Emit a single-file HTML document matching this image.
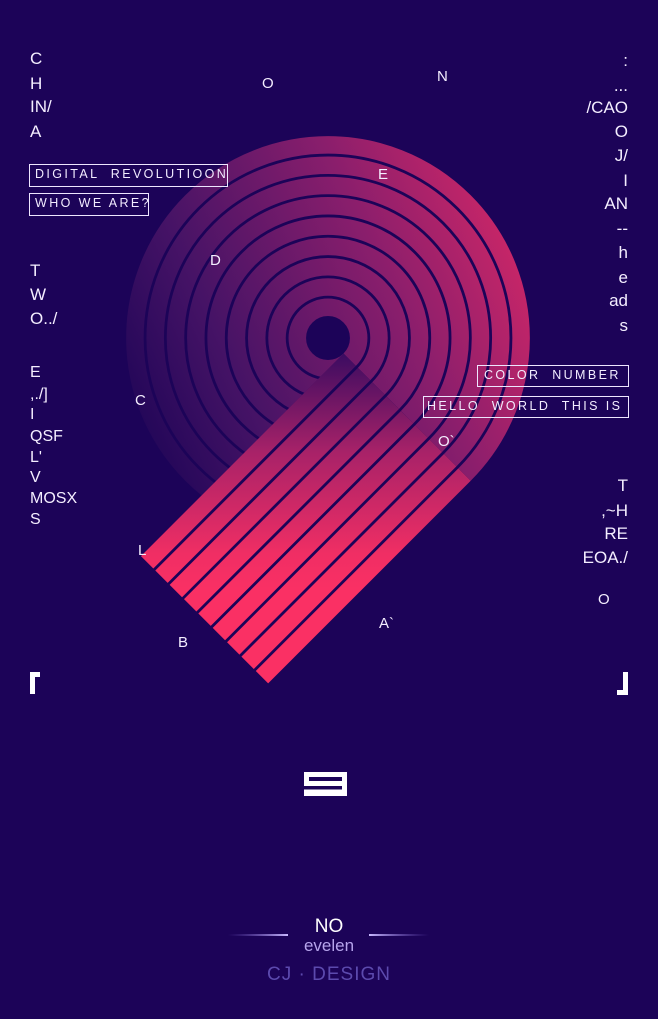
<!DOCTYPE html>
<html><head><meta charset="utf-8"><style>
*{margin:0;padding:0;box-sizing:border-box}
html,body{width:658px;height:1019px;overflow:hidden;background:#1c0358}
body{position:relative;font-family:"Liberation Sans",sans-serif;color:#f4eeff}
.t{position:absolute;font-size:17px;line-height:1;white-space:pre}
.r{text-align:right;right:30px}
.box{position:absolute;border:1.5px solid #eee6ff;font-size:12.5px;letter-spacing:2.4px;line-height:19px;padding-left:5px;white-space:pre;color:#f2ecff}
svg{position:absolute;left:0;top:0}
</style></head><body>
<svg width="658" height="1019" viewBox="0 0 658 1019">
<defs>
<linearGradient id="gc" gradientUnits="userSpaceOnUse" x1="140" y1="480" x2="540" y2="300">
<stop offset="0" stop-color="#1c0456"/><stop offset="0.3" stop-color="#461366"/><stop offset="0.7" stop-color="#8a1e6c"/><stop offset="1" stop-color="#c82668"/>
</linearGradient>
<linearGradient id="gt" gradientUnits="userSpaceOnUse" x1="0" y1="0" x2="180" y2="180">
<stop offset="0" stop-color="#2a0860"/><stop offset="0.45" stop-color="#a82268"/><stop offset="0.85" stop-color="#f02e64"/><stop offset="1" stop-color="#fa3064"/>
</linearGradient>
</defs>
<g fill="none" stroke="url(#gc)" stroke-width="17.5">
<circle cx="328" cy="338" r="30.7"/>
<circle cx="328" cy="338" r="51"/>
<circle cx="328" cy="338" r="71.3"/>
<circle cx="328" cy="338" r="91.6"/>
<circle cx="328" cy="338" r="111.9"/>
<circle cx="328" cy="338" r="132.2"/>
<circle cx="328" cy="338" r="152.5"/>
<circle cx="328" cy="338" r="172.8"/>
<circle cx="328" cy="338" r="193.1"/>
</g>
<polygon points="343.6,353.6 473,483 270.4,685.6 141,556.2" fill="#1c0358"/>
<g stroke="url(#gt)" stroke-width="17.5" fill="none" stroke-linecap="butt" transform="translate(328 338) rotate(45)">
<line x1="30.7" y1="0" x2="30.7" y2="286.5"/>
<line x1="51" y1="0" x2="51" y2="286.5"/>
<line x1="71.3" y1="0" x2="71.3" y2="286.5"/>
<line x1="91.6" y1="0" x2="91.6" y2="286.5"/>
<line x1="111.9" y1="0" x2="111.9" y2="286.5"/>
<line x1="132.2" y1="0" x2="132.2" y2="286.5"/>
<line x1="152.5" y1="0" x2="152.5" y2="286.5"/>
<line x1="172.8" y1="0" x2="172.8" y2="286.5"/>
<line x1="193.1" y1="0" x2="193.1" y2="286.5"/>
</g>
<path d="M30 672h10v5h-5v17h-5z" fill="#fff"/>
<path d="M628 695h-11v-5h6v-18h5z" fill="#fff"/>
<rect x="304" y="772" width="43" height="24" fill="#fff"/>
<rect x="309" y="777" width="33" height="4" fill="#1c0358"/>
<rect x="304" y="786" width="38" height="3.5" fill="#1c0358"/>
<defs>
<linearGradient id="ll" x1="0" x2="1"><stop offset="0" stop-color="#7a60d0" stop-opacity="0"/><stop offset="1" stop-color="#c8b8ff"/></linearGradient>
<linearGradient id="lr" x1="0" x2="1"><stop offset="0" stop-color="#c8b8ff"/><stop offset="1" stop-color="#7a60d0" stop-opacity="0"/></linearGradient>
</defs>
<rect x="228" y="934" width="60" height="2" fill="url(#ll)"/>
<rect x="369" y="934" width="60" height="2" fill="url(#lr)"/>
</svg>

<div class="t" style="left:30px;top:50px">C</div>
<div class="t" style="left:30px;top:75px">H</div>
<div class="t" style="left:30px;top:98px">IN/</div>
<div class="t" style="left:30px;top:123px">A</div>
<div class="box" style="left:29px;top:164px;width:199px;height:23px">DIGITAL  REVOLUTIOON</div>
<div class="box" style="left:29px;top:193px;width:120px;height:23px">WHO WE ARE?</div>
<div class="t" style="left:30px;top:262px">T</div>
<div class="t" style="left:30px;top:286px">W</div>
<div class="t" style="left:30px;top:310px">O../</div>
<div class="t" style="left:30px;top:365px;font-size:16px">E</div>
<div class="t" style="left:30px;top:387px;font-size:16px">,./]</div>
<div class="t" style="left:30px;top:407px;font-size:16px">I</div>
<div class="t" style="left:30px;top:429px;font-size:16px">QSF</div>
<div class="t" style="left:30px;top:450px;font-size:16px">L'</div>
<div class="t" style="left:30px;top:470px;font-size:16px">V</div>
<div class="t" style="left:30px;top:491px;font-size:16px">MOSX</div>
<div class="t" style="left:30px;top:512px;font-size:16px">S</div>

<div class="t r" style="top:52px">:</div>
<div class="t r" style="top:77px">...</div>
<div class="t r" style="top:99px">/CAO</div>
<div class="t r" style="top:123px">O</div>
<div class="t r" style="top:147px">J/</div>
<div class="t r" style="top:172px">I</div>
<div class="t r" style="top:195px">AN</div>
<div class="t r" style="top:220px">--</div>
<div class="t r" style="top:244px">h</div>
<div class="t r" style="top:269px">e</div>
<div class="t r" style="top:292px">ad</div>
<div class="t r" style="top:317px">s</div>
<div class="box" style="left:477px;top:365px;width:152px;height:22px;padding-left:6px">COLOR  NUMBER</div>
<div class="box" style="left:423px;top:396px;width:206px;height:22px;padding-left:3px">HELLO  WORLD  THIS IS</div>
<div class="t r" style="top:477px">T</div>
<div class="t r" style="top:502px">,~H</div>
<div class="t r" style="top:525px">RE</div>
<div class="t r" style="top:549px">EOA./</div>
<div class="t" style="left:598px;top:592px;font-size:15px">O</div>

<div class="t" style="left:262px;top:76px;font-size:15px">O</div>
<div class="t" style="left:437px;top:69px;font-size:15px">N</div>
<div class="t" style="left:378px;top:167px;font-size:15px">E</div>
<div class="t" style="left:210px;top:253px;font-size:15px">D</div>
<div class="t" style="left:135px;top:393px;font-size:15px">C</div>
<div class="t" style="left:438px;top:434px;font-size:15px">O`</div>
<div class="t" style="left:138px;top:543px;font-size:15px">L</div>
<div class="t" style="left:178px;top:635px;font-size:15px">B</div>
<div class="t" style="left:379px;top:616px;font-size:15px">A`</div>

<div class="t" style="left:0;width:658px;text-align:center;top:917px;font-size:19px;color:#fff">NO</div>
<div class="t" style="left:0;width:658px;text-align:center;top:937px;font-size:17px;color:#b6a4ec">evelen</div>
<div class="t" style="left:0;width:658px;text-align:center;top:965px;font-size:19px;color:#5c4aae;letter-spacing:1px">CJ &middot; DESIGN</div>
</body></html>
